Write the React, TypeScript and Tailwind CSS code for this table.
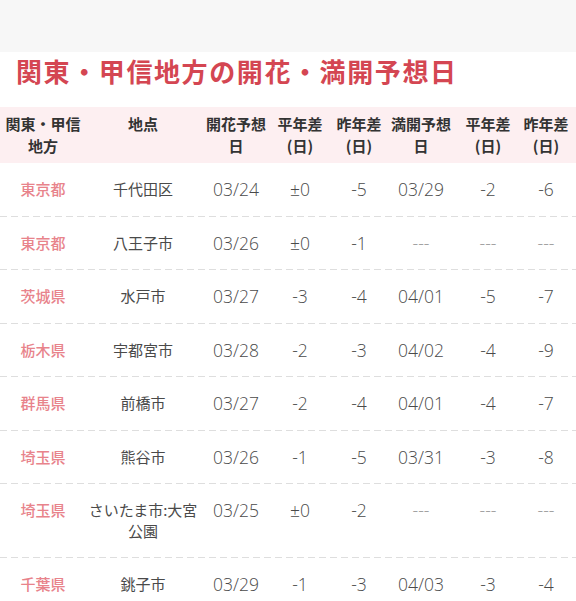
const rows: string[][] = [
  ["東京都", "千代田区", "03/24", "±0", "-5", "03/29", "-2", "-6"],
  ["東京都", "八王子市", "03/26", "±0", "-1", "---", "---", "---"],
  ["茨城県", "水戸市", "03/27", "-3", "-4", "04/01", "-5", "-7"],
  ["栃木県", "宇都宮市", "03/28", "-2", "-3", "04/02", "-4", "-9"],
  ["群馬県", "前橋市", "03/27", "-2", "-4", "04/01", "-4", "-7"],
  ["埼玉県", "熊谷市", "03/26", "-1", "-5", "03/31", "-3", "-8"],
  ["埼玉県", "さいたま市:大宮\n公園", "03/25", "±0", "-2", "---", "---", "---"],
  ["千葉県", "銚子市", "03/29", "-1", "-3", "04/03", "-3", "-4"],
];

const headers = [
  "関東・甲信\n地方",
  "地点",
  "開花予想\n日",
  "平年差\n(日)",
  "昨年差\n(日)",
  "満開予想\n日",
  "平年差\n(日)",
  "昨年差\n(日)",
];

const grid = "grid grid-cols-[86px_114px_72px_56px_62px_62px_72px_44px]";
const cjk = { fontFamily: "'Noto Sans CJK JP', sans-serif" };

const Lines = ({ text }: { text: string }) => (
  <>
    {text.split("\n").map((line, i) => (
      <span key={i} className="block whitespace-nowrap">
        {line}
      </span>
    ))}
  </>
);

export default function App() {
  return (
    <div className="min-h-[601px] w-[576px] bg-white" style={cjk}>
      <div className="h-[52px] bg-[#f7f7f7]" />
      <h1 className="pl-[16px] pt-[1px] pb-[18px] text-[26px] font-bold leading-[36px] tracking-[1.6px] text-[#d44652]">
        関東・甲信地方の開花・満開予想日
      </h1>
      <div className={`${grid} bg-[#fdeff1] py-[6px] text-[15px] font-bold leading-[22px] text-[#333]`}>
        {headers.map((h, i) => (
          <div key={i} className="flex flex-col items-center text-center">
            <Lines text={h} />
          </div>
        ))}
      </div>
      {rows.map((row, r) => (
        <div key={r}>
          <div className={`${grid} py-4 leading-[20.5px]`}>
            {row.map((cell, c) => {
              if (c === 0) {
                return (
                  <div key={c} className="flex flex-col items-center text-[15px] font-medium text-[#e8838b]">
                    <Lines text={cell} />
                  </div>
                );
              }
              if (c === 1) {
                return (
                  <div key={c} className="flex flex-col items-center text-center text-[15px] text-[#4a4a4a]">
                    <Lines text={cell} />
                  </div>
                );
              }
              return (
                <div
                  key={c}
                  className={`flex flex-col items-center text-[17.5px] font-light ${
                    cell === "---" ? "text-[#999]" : "text-[#4a4a4a]"
                  }`}
                  style={{ fontFamily: "'Open Sans', 'Noto Sans CJK JP', sans-serif" }}
                >
                  <Lines text={cell} />
                </div>
              );
            })}
          </div>
          <div className="h-px bg-[repeating-linear-gradient(90deg,#dedede_0_7px,transparent_7px_11px)]" />
        </div>
      ))}
    </div>
  );
}
